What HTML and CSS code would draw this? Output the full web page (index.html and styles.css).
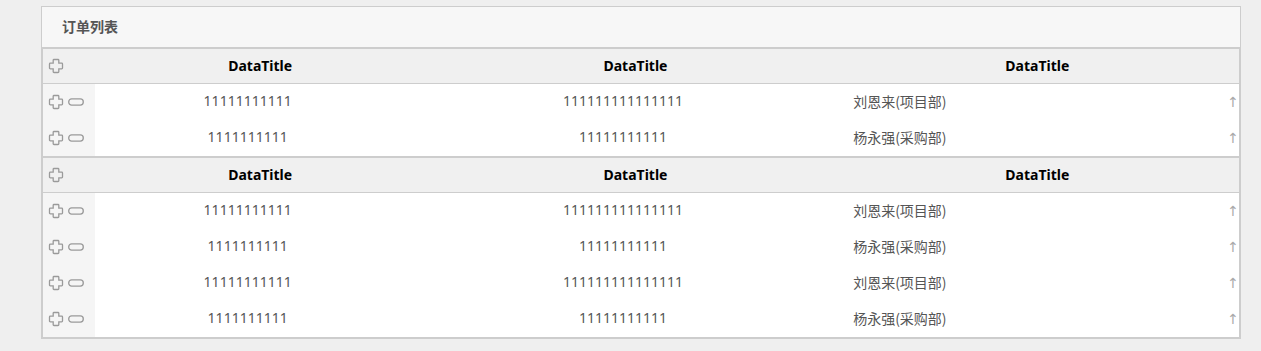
FILE: index.html
```html
<!DOCTYPE html>
<html lang="zh">
<head>
<meta charset="utf-8">
<title>订单列表</title>
<link rel="stylesheet" href="styles.css">
</head>
<body>
<svg width="0" height="0" class="defs">
  <defs>
    <symbol id="plus" viewBox="0 0 16 16">
      <path d="M6 1.5 h4 a0.8 0.8 0 0 1 0.8 0.8 V5.2 H13.7 a0.8 0.8 0 0 1 0.8 0.8 v4 a0.8 0.8 0 0 1 -0.8 0.8 H10.8 V13.7 a0.8 0.8 0 0 1 -0.8 0.8 h-4 a0.8 0.8 0 0 1 -0.8 -0.8 V10.8 H2.3 a0.8 0.8 0 0 1 -0.8 -0.8 v-4 a0.8 0.8 0 0 1 0.8 -0.8 H5.2 V2.3 a0.8 0.8 0 0 1 0.8 -0.8 z" fill="none" stroke="#9a9a9a" stroke-width="1.3"/>
    </symbol>
    <symbol id="minus" viewBox="0 0 16 8">
      <rect x="0.7" y="0.9" width="14.6" height="6.2" rx="3" fill="none" stroke="#9a9a9a" stroke-width="1.3"/>
    </symbol>
  </defs>
</svg>
<div class="panel">
  <div class="panel-head">订单列表</div>
  <table class="grid">
    <colgroup><col class="c0"><col class="c1"><col class="c2"><col class="c3"><col class="c4"></colgroup>
    <thead>
      <tr>
        <th class="ops"><svg class="ico-plus"><use href="#plus"/></svg></th>
        <th>DataTitle</th><th>DataTitle</th><th>DataTitle</th><th class="end"></th>
      </tr>
    </thead>
    <tbody>
      <tr>
        <td class="ops"><svg class="ico-plus"><use href="#plus"/></svg><svg class="ico-minus"><use href="#minus"/></svg></td>
        <td class="num">11111111111</td><td class="num">111111111111111</td><td class="name">刘恩来(项目部)</td><td class="end">↑</td>
      </tr>
      <tr>
        <td class="ops"><svg class="ico-plus"><use href="#plus"/></svg><svg class="ico-minus"><use href="#minus"/></svg></td>
        <td class="num">1111111111</td><td class="num">11111111111</td><td class="name">杨永强(采购部)</td><td class="end">↑</td>
      </tr>
    </tbody>
  </table>
  <table class="grid">
    <colgroup><col class="c0"><col class="c1"><col class="c2"><col class="c3"><col class="c4"></colgroup>
    <thead>
      <tr>
        <th class="ops"><svg class="ico-plus"><use href="#plus"/></svg></th>
        <th>DataTitle</th><th>DataTitle</th><th>DataTitle</th><th class="end"></th>
      </tr>
    </thead>
    <tbody>
      <tr>
        <td class="ops"><svg class="ico-plus"><use href="#plus"/></svg><svg class="ico-minus"><use href="#minus"/></svg></td>
        <td class="num">11111111111</td><td class="num">111111111111111</td><td class="name">刘恩来(项目部)</td><td class="end">↑</td>
      </tr>
      <tr>
        <td class="ops"><svg class="ico-plus"><use href="#plus"/></svg><svg class="ico-minus"><use href="#minus"/></svg></td>
        <td class="num">1111111111</td><td class="num">11111111111</td><td class="name">杨永强(采购部)</td><td class="end">↑</td>
      </tr>
      <tr>
        <td class="ops"><svg class="ico-plus"><use href="#plus"/></svg><svg class="ico-minus"><use href="#minus"/></svg></td>
        <td class="num">11111111111</td><td class="num">111111111111111</td><td class="name">刘恩来(项目部)</td><td class="end">↑</td>
      </tr>
      <tr>
        <td class="ops"><svg class="ico-plus"><use href="#plus"/></svg><svg class="ico-minus"><use href="#minus"/></svg></td>
        <td class="num">1111111111</td><td class="num">11111111111</td><td class="name">杨永强(采购部)</td><td class="end">↑</td>
      </tr>
    </tbody>
  </table>
</div>
</body>
</html>
```
FILE: styles.css
```css
html, body {
  margin: 0;
  padding: 0;
  background: #efefef;
}
body {
  padding: 6px 0 0 41px;
  font-family: "Noto Sans", "Noto Sans CJK SC", sans-serif;
  font-size: 14px;
  color: #555;
}
.defs {
  position: absolute;
  width: 0;
  height: 0;
}
.panel {
  width: 1198px;
  border: 1px solid #cdcdcd;
  background: #f7f7f7;
}
.panel-head {
  height: 39px;
  line-height: 38px;
  padding: 0 0 1px 20px;
  font-weight: bold;
  color: #555;
  border-bottom: 1px solid #cdcdcd;
  font-family: "Noto Sans CJK SC", sans-serif;
}
.grid {
  width: 1198px;
  border-collapse: collapse;
  table-layout: fixed;
  border: 1px solid #cdcdcd;
  background: #fff;
}
.c0 { width: 52px; }
.c1 { width: 306px; }
.c2 { width: 444px; }
.c3 { width: 359px; }
.c4 { width: 35px; }
.grid thead tr {
  background: #f0f0f0;
  border-bottom: 1px solid #cdcdcd;
}
.grid th {
  height: 32px;
  padding: 0 0 2px 25px;
  font-weight: bold;
  color: #000;
  text-align: center;
  font-size: 14px;
}
.grid td {
  height: 34px;
  padding: 0 0 2px 0;
  line-height: 20px;
}
.grid th.ops, .grid td.ops {
  padding: 0 0 0 5px;
  text-align: left;
  white-space: nowrap;
  line-height: 0;
}
.grid td.ops {
  height: 36px;
  background: #f5f5f5;
}
.grid th.ops {
  height: 34px;
}
.ico-plus {
  width: 16px;
  height: 16px;
  vertical-align: middle;
}
.ico-minus {
  width: 16px;
  height: 8px;
  margin-left: 4px;
  vertical-align: middle;
}
.num {
  text-align: center;
}
.grid td.name {
  padding-left: 8px;
  font-family: "Noto Sans CJK SC", sans-serif;
}
.grid .end {
  padding: 0 0 1px 0;
  text-align: right;
  color: #aaa;
  font-size: 14px;
  font-family: "DejaVu Sans", sans-serif;
}
.grid th.end {
  padding: 0;
}
```
